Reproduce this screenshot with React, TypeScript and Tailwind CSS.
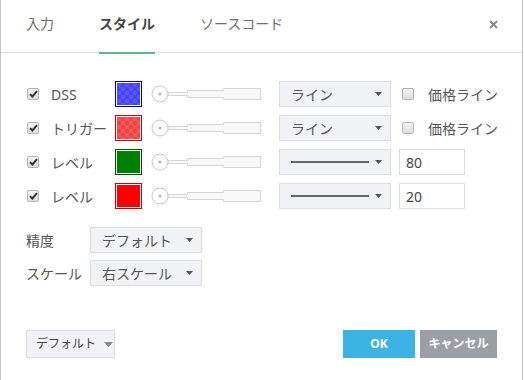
import React from "react";

type Swatch = { border: string; fill: string };

const rows: {
  label: string;
  swatch: Swatch;
  kind: "type" | "level";
  value?: string;
}[] = [
  {
    label: "DSS",
    swatch: {
      border: "border-[#0000c8]",
      fill: "bg-[conic-gradient(#4646ee_25%,#5656fb_0_50%,#4646ee_0_75%,#5656fb_0)] bg-[length:8px_8px]",
    },
    kind: "type",
  },
  {
    label: "トリガー",
    swatch: {
      border: "border-[#c80000]",
      fill: "bg-[conic-gradient(#ee4646_25%,#f65858_0_50%,#ee4646_0_75%,#f65858_0)] bg-[length:8px_8px]",
    },
    kind: "type",
  },
  {
    label: "レベル",
    swatch: { border: "border-[#004a00]", fill: "bg-[#008000]" },
    kind: "level",
    value: "80",
  },
  {
    label: "レベル",
    swatch: { border: "border-[#c80000]", fill: "bg-[#ff0000]" },
    kind: "level",
    value: "20",
  },
];

function CheckBox({ checked }: { checked?: boolean }) {
  return (
    <span className="flex h-[12px] w-[12px] shrink-0 items-center justify-center rounded-[2px] border border-[#b4b4b4] bg-[linear-gradient(#f4f4f4,#dedede)]">
      {checked ? (
        <svg width="9" height="8" viewBox="0 0 9 8">
          <path
            d="M1 4.2 L3.4 6.5 L8 1.2"
            fill="none"
            stroke="#333"
            strokeWidth="2"
          />
        </svg>
      ) : null}
    </span>
  );
}

function Caret() {
  return (
    <svg width="7" height="4" viewBox="0 0 7 4" className="shrink-0">
      <path d="M0 0 H7 L3.5 4 Z" fill="#555" />
    </svg>
  );
}

function WidthSlider() {
  return (
    <svg width="111" height="20" viewBox="0 0 111 20" className="ml-[9px] shrink-0">
      <path
        d="M17 8.5 H36.5 V6.5 H72.5 V4.5 H109.5 V15.5 H72.5 V13.5 H36.5 V11.5 H17"
        fill="#f8f8f8"
        stroke="#d4d4d4"
      />
      <circle cx="9" cy="10" r="8" fill="#fff" stroke="#c6c9d1" />
      <circle cx="9" cy="10" r="1.6" fill="#b3b7c1" />
    </svg>
  );
}

function SelectBox({
  children,
  className = "",
}: {
  children: React.ReactNode;
  className?: string;
}) {
  return (
    <div
      className={`flex h-[26px] w-[112px] shrink-0 items-center border border-[#dcdde2] bg-[#f1f2f6] pl-[11px] pr-[8px] text-[14px] text-[#555] ${className}`}
    >
      <div className="flex-1 whitespace-nowrap">{children}</div>
      <Caret />
    </div>
  );
}

export default function App() {
  return (
    <div className="h-[380px] w-[523px] border-x border-[#c4c4c4] bg-white font-['Noto_Sans','Noto_Sans_CJK_JP',sans-serif] text-[#555]">
      <div className="flex h-[53px] items-start border-b border-[#dcdde1] px-[25px] pt-[15px]">
        <div className="flex gap-[45px] text-[14px] leading-[18px]">
          <span className="text-[#6f6f6f]">入力</span>
          <span className="relative h-[38px] font-bold text-[#444]">
            スタイル
            <span className="absolute bottom-[-1px] left-0 h-[2px] w-full bg-[#5bb98c]" />
          </span>
          <span className="text-[#6f6f6f]">ソースコード</span>
        </div>
        <svg width="9" height="9" viewBox="0 0 9 9" className="ml-auto mr-[-1px] mt-[5px]">
          <path d="M1 1 L8 8 M8 1 L1 8" stroke="#8a8a8a" strokeWidth="2" />
        </svg>
      </div>

      <div className="px-[25px] pt-[28px]">
        <div className="flex flex-col gap-[8px]">
          {rows.map((r, i) => (
            <div key={i} className="flex h-[26px] items-center">
              <div className="w-[25px] shrink-0 pl-[1px]">
                <CheckBox checked />
              </div>
              <span className="w-[64px] shrink-0 whitespace-nowrap text-[14px]">{r.label}</span>
              <div className={`h-[26px] w-[27px] shrink-0 border ${r.swatch.border} bg-white p-[1px]`}>
                <div className={`h-full w-full ${r.swatch.fill}`} />
              </div>
              <WidthSlider />
              {r.kind === "type" ? (
                <>
                  <SelectBox className="ml-[17px]">ライン</SelectBox>
                  <div className="ml-[11px]">
                    <CheckBox />
                  </div>
                  <span className="ml-[14px] whitespace-nowrap text-[14px]">価格ライン</span>
                </>
              ) : (
                <>
                  <SelectBox className="ml-[17px]">
                    <div className="h-[2px] w-[78px] bg-[#666]" />
                  </SelectBox>
                  <div className="ml-[8px] flex h-[26px] w-[66px] shrink-0 items-center border border-[#dcdde2] bg-white px-[6px] text-[14px] text-[#444]">
                    {r.value}
                  </div>
                </>
              )}
            </div>
          ))}
        </div>

        <div className="mt-[18px] flex flex-col gap-[7px]">
          <div className="flex items-center">
            <span className="w-[64px] shrink-0 text-[14px]">精度</span>
            <SelectBox>デフォルト</SelectBox>
          </div>
          <div className="flex items-center">
            <span className="w-[64px] shrink-0 text-[14px]">スケール</span>
            <SelectBox>右スケール</SelectBox>
          </div>
        </div>

        <div className="mt-[44px] flex items-center">
          <button className="flex h-[28px] w-[89px] items-center gap-[8px] border border-[#dcdde2] bg-[#f1f2f6] pl-[9px] text-[12px] text-[#444]">
            デフォルト
            <svg width="9" height="5" viewBox="0 0 9 5">
              <path d="M0 0 H9 L4.5 5 Z" fill="#888" />
            </svg>
          </button>
          <button className="ml-auto h-[28px] w-[72px] bg-[#3db3e3] text-[12px] font-bold text-white">
            OK
          </button>
          <button className="ml-[5px] h-[28px] w-[77px] bg-[#9c9ea5] text-[12px] font-bold text-white">
            キャンセル
          </button>
        </div>
      </div>
    </div>
  );
}
